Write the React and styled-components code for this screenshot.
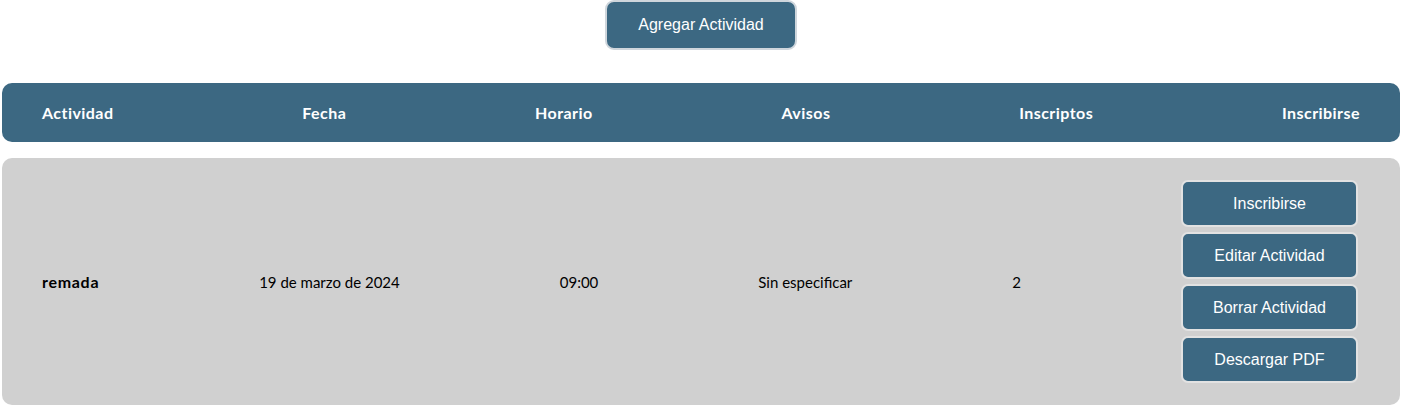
import React from "react";
import styled, { createGlobalStyle } from "styled-components";

const Global = createGlobalStyle`
  html, body { margin: 0; padding: 0; background: #fff; }
  body { font-family: "Lato", "Liberation Sans", sans-serif; }
`;

const Page = styled.div`
  display: flex;
  flex-direction: column;
  padding: 0 3px 0 2px;
`;

const TopBar = styled.div`
  display: flex;
  justify-content: center;
  padding-bottom: 33px;
`;

const Button = styled.button`
  box-sizing: border-box;
  background: #3c6882;
  color: #fff;
  font-family: "Liberation Sans", Arial, sans-serif;
  font-size: 16px;
  border: 2px solid ${(p) => p.$border || "#d6d6d6"};
  border-radius: ${(p) => p.$radius || "8px"};
  width: ${(p) => p.$w};
  height: ${(p) => p.$h};
  padding: 0;
  cursor: pointer;
`;

const HeaderBar = styled.div`
  display: flex;
  justify-content: space-between;
  align-items: center;
  height: 59px;
  padding: 0 40px;
  background: #3c6882;
  border-radius: 10px;
  margin-bottom: 16px;
`;

const HeadCell = styled.span`
  color: #fff;
  font-weight: 700;
  font-size: 16px;
  letter-spacing: 0.45px;
`;

const Row = styled.div`
  display: flex;
  justify-content: space-between;
  align-items: center;
  background: #d0d0d0;
  border-radius: 10px;
  padding: 22px 42px 22px 40px;
`;

const Cell = styled.span`
  color: #000;
  font-size: ${(p) => (p.$bold ? "16px" : "15px")};
  font-weight: ${(p) => (p.$bold ? 700 : 400)};
  letter-spacing: ${(p) => (p.$bold ? "0.7px" : "0")};
`;

const Actions = styled.div`
  display: flex;
  flex-direction: column;
  gap: 5px;
`;

export default function App() {
  const heads = ["Actividad", "Fecha", "Horario", "Avisos", "Inscriptos", "Inscribirse"];
  const actions = ["Inscribirse", "Editar Actividad", "Borrar Actividad", "Descargar PDF"];
  return (
    <>
      <Global />
      <Page>
        <TopBar>
          <Button $w="192px" $h="50px" $border="#cfd6dc" $radius="9px">
            Agregar Actividad
          </Button>
        </TopBar>
        <HeaderBar>
          {heads.map((h) => (
            <HeadCell key={h}>{h}</HeadCell>
          ))}
        </HeaderBar>
        <Row>
          <Cell $bold>remada</Cell>
          <Cell>19 de marzo de 2024</Cell>
          <Cell>09:00</Cell>
          <Cell>Sin especificar</Cell>
          <Cell>2</Cell>
          <Actions>
            {actions.map((a) => (
              <Button key={a} $w="177px" $h="47px" $border="#e2e2e2" $radius="7px">
                {a}
              </Button>
            ))}
          </Actions>
        </Row>
      </Page>
    </>
  );
}
